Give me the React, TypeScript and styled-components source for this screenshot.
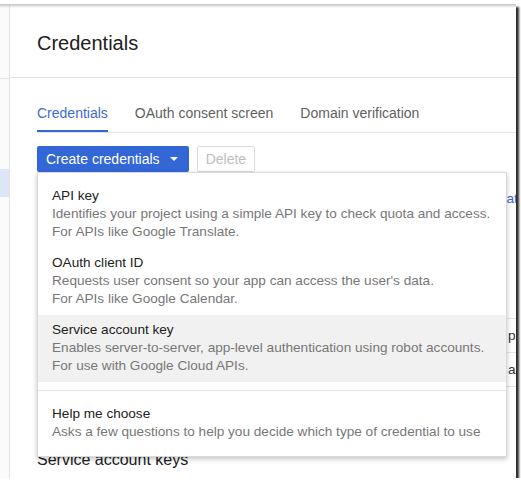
import React from 'react'
import styled, { createGlobalStyle } from 'styled-components'

const GlobalStyle = createGlobalStyle`
  html, body {
    margin: 0;
    padding: 0;
    background: #ffffff;
  }
  body {
    font-family: 'Liberation Sans', Arial, sans-serif;
  }
`

const Screen = styled.div`
  position: relative;
  margin-top: 4px;
  width: 516px;
  height: 474px;
  display: flex;
  overflow: hidden;
  background: #ffffff;
  box-shadow: 3px 3px 2px rgba(0, 0, 0, 0.82);

  &::before {
    content: '';
    position: absolute;
    left: 0;
    right: 0;
    top: 0;
    height: 4px;
    background: linear-gradient(#c4c4c4, rgba(255, 255, 255, 0));
    z-index: 5;
  }
`

const Sidebar = styled.div`
  width: 9px;
  flex-shrink: 0;
  border-right: 1px solid #e3e3e3;
  background: #fbfbfb;
`

const SidebarHeader = styled.div`
  height: 74px;
  border-bottom: 1px solid #e3e3e3;
`

const SidebarItem = styled.div<{ $active?: boolean }>`
  height: 28px;
  margin-top: 90px;
  background: ${(p) => (p.$active ? '#dde6f8' : 'transparent')};
`

const Main = styled.div`
  flex: 1;
  min-width: 0;
  display: flex;
  flex-direction: column;
`

const Header = styled.div`
  height: 74px;
  box-sizing: border-box;
  padding: 5px 0 0 27px;
  display: flex;
  align-items: center;
  border-bottom: 1px solid #e3e3e3;
`

const Title = styled.h1`
  margin: 0;
  font-size: 20px;
  font-weight: 400;
  color: #212121;
`

const Body = styled.div`
  padding-left: 27px;
`

const TabBar = styled.div`
  display: flex;
  margin-top: 25px;
  border-bottom: 1px solid #e3e3e3;
`

const Tab = styled.div<{ $active?: boolean }>`
  font-size: 14px;
  line-height: 20px;
  padding-bottom: 7px;
  margin-right: 27px;
  border-bottom: 2px solid ${(p) => (p.$active ? '#3367d6' : 'transparent')};
  color: ${(p) => (p.$active ? '#3d6bd4' : '#5f5f5f')};
  white-space: nowrap;
`

const Toolbar = styled.div`
  display: flex;
  gap: 8px;
  margin-top: 13px;
`

const MenuAnchor = styled.div`
  position: relative;
`

const PrimaryButton = styled.button`
  height: 26px;
  display: flex;
  align-items: center;
  gap: 10px;
  padding: 0 11px 0 9px;
  border: none;
  border-radius: 2px;
  background: #3367d6;
  color: #ffffff;
  font-family: inherit;
  font-size: 14px;
  white-space: nowrap;
`

const Caret = styled.span`
  width: 0;
  height: 0;
  border-left: 4px solid transparent;
  border-right: 4px solid transparent;
  border-top: 4px solid #ffffff;
`

const GhostButton = styled.button`
  height: 26px;
  padding: 0 8px;
  border: 1px solid #dcdcdc;
  border-radius: 2px;
  background: #ffffff;
  color: #bdbdbd;
  font-family: inherit;
  font-size: 14px;
`

const Menu = styled.div`
  position: absolute;
  top: 100%;
  left: 0;
  width: 470px;
  box-sizing: border-box;
  padding: 8px 0;
  background: #ffffff;
  border: 1px solid #d9d9d9;
  box-shadow: 0 2px 5px rgba(0, 0, 0, 0.24);
  z-index: 3;
`

const MenuItem = styled.div<{ $active?: boolean }>`
  padding: 6px 14px 7px;
  background: ${(p) => (p.$active ? '#f1f1f1' : '#ffffff')};
  font-size: 13.6px;
  line-height: 18px;
  white-space: nowrap;
`

const ItemTitle = styled.div`
  color: #212121;
`

const ItemText = styled.div`
  color: #777777;
`

const MenuDivider = styled.div`
  height: 1px;
  margin: 8px 0;
  background: #e6e6e6;
`

const Info = styled.div`
  display: flex;
  justify-content: space-between;
  width: 499px;
  margin-top: 18px;
  font-size: 13.6px;
  line-height: 18px;
  color: #666666;
  white-space: nowrap;
`

const Link = styled.span`
  color: #3367d6;
`

const SectionTitle = styled.h2<{ $top: number }>`
  margin: ${(p) => p.$top}px 0 0;
  font-size: 16px;
  line-height: 20px;
  font-weight: 400;
  color: #212121;
  white-space: nowrap;
`

const Table = styled.div`
  margin-top: 18px;
  width: 700px;
`

const Row = styled.div<{ $head?: boolean }>`
  display: grid;
  grid-template-columns: 200px 150px 121px 1fr;
  height: ${(p) => (p.$head ? 36 : 33)}px;
  align-items: center;
  border-bottom: 1px solid #e3e3e3;
  font-size: 13.6px;
  color: ${(p) => (p.$head ? '#757575' : '#333333')};
  white-space: nowrap;
`

const menuItems = [
  {
    title: 'API key',
    lines: [
      'Identifies your project using a simple API key to check quota and access.',
      'For APIs like Google Translate.',
    ],
  },
  {
    title: 'OAuth client ID',
    lines: [
      "Requests user consent so your app can access the user's data.",
      'For APIs like Google Calendar.',
    ],
  },
  {
    title: 'Service account key',
    lines: [
      'Enables server-to-server, app-level authentication using robot accounts.',
      'For use with Google Cloud APIs.',
    ],
    active: true,
  },
]

export default function App() {
  return (
    <>
      <GlobalStyle />
      <Screen>
        <Sidebar>
          <SidebarHeader />
          <SidebarItem $active />
        </Sidebar>
        <Main>
          <Header>
            <Title>Credentials</Title>
          </Header>
          <Body>
            <TabBar>
              <Tab $active>Credentials</Tab>
              <Tab>OAuth consent screen</Tab>
              <Tab>Domain verification</Tab>
            </TabBar>
            <Toolbar>
              <MenuAnchor>
                <PrimaryButton>
                  Create credentials
                  <Caret />
                </PrimaryButton>
                <Menu>
                  {menuItems.map((item) => (
                    <MenuItem key={item.title} $active={item.active}>
                      <ItemTitle>{item.title}</ItemTitle>
                      {item.lines.map((line) => (
                        <ItemText key={line}>{line}</ItemText>
                      ))}
                    </MenuItem>
                  ))}
                  <MenuDivider />
                  <MenuItem>
                    <ItemTitle>Help me choose</ItemTitle>
                    <ItemText>Asks a few questions to help you decide which type of credential to use</ItemText>
                  </MenuItem>
                </Menu>
              </MenuAnchor>
              <GhostButton>Delete</GhostButton>
            </Toolbar>
            <Info>
              <span>Create credentials to access your enabled APIs.</span>
              <Link>API key creation</Link>
            </Info>
            <SectionTitle $top={36}>OAuth 2.0 client IDs</SectionTitle>
            <Table>
              <Row $head>
                <span>Name</span>
                <span>Creation date</span>
                <span>Type</span>
                <span />
              </Row>
              <Row>
                <span>Web client 1</span>
                <span>Mar 2, 2016</span>
                <span>Web application</span>
                <span>project-web-client</span>
              </Row>
              <Row>
                <span>Android client</span>
                <span>Mar 1, 2016</span>
                <span>Android</span>
                <span>app-android-client</span>
              </Row>
            </Table>
            <SectionTitle $top={63}>Service account keys</SectionTitle>
          </Body>
        </Main>
      </Screen>
    </>
  )
}
